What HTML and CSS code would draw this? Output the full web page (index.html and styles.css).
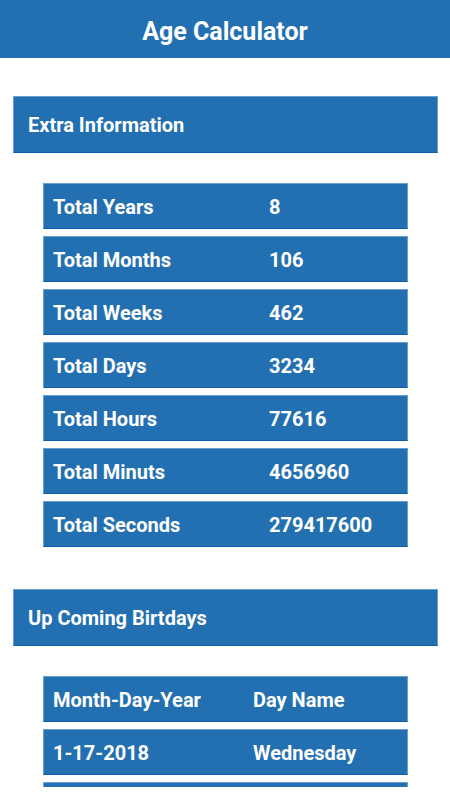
FILE: index.html
```html
<!DOCTYPE html>
<html lang="en">
<head>
<meta charset="utf-8">
<title>Age Calculator</title>
<link rel="stylesheet" href="styles.css">
</head>
<body>
<header class="appbar"><h1 class="appbar-title">Age Calculator</h1></header>
<main class="scroll">
  <section class="section">
    <h2 class="section-title">Extra Information</h2>
    <div class="table">
      <div class="row"><span>Total Years</span><span>8</span></div>
      <div class="row"><span>Total Months</span><span>106</span></div>
      <div class="row"><span>Total Weeks</span><span>462</span></div>
      <div class="row"><span>Total Days</span><span>3234</span></div>
      <div class="row"><span>Total Hours</span><span>77616</span></div>
      <div class="row"><span>Total Minuts</span><span>4656960</span></div>
      <div class="row"><span>Total Seconds</span><span>279417600</span></div>
    </div>
  </section>
  <section class="section section-second">
    <h2 class="section-title">Up Coming Birtdays</h2>
    <div class="table table-dates">
      <div class="row"><span>Month-Day-Year</span><span>Day Name</span></div>
      <div class="row"><span>1-17-2018</span><span>Wednesday</span></div>
      <div class="row"></div>
    </div>
  </section>
</main>
</body>
</html>
```

FILE: styles.css
```css
* { box-sizing: border-box; }
html, body { margin: 0; padding: 0; }
body {
  width: 450px;
  height: 800px;
  background: #ffffff;
  font-family: Roboto, "Liberation Sans", Arial, sans-serif;
  color: #ffffff;
  overflow: hidden;
}
.appbar {
  height: 58px;
  background: #2270b1;
  display: flex;
  align-items: center;
  justify-content: center;
  padding-top: 4px;
}
.appbar-title {
  margin: 0;
  font-size: 25px;
  font-weight: 700;
  line-height: 1;
}
.scroll {
  height: 729px;
  overflow: hidden;
  padding: 38px 12px 0 13px;
}
.section-second { margin-top: 42px; }
.section-title {
  margin: 0;
  height: 57px;
  display: flex;
  align-items: center;
  padding-left: 14px;
  padding-top: 1px;
  font-size: 20px;
  font-weight: 700;
  background: #2270b1;
  border: 1px solid #6a9fd0;
  border-bottom-color: #0e5ea8;
}
.table {
  margin: 30px 30px 0 30px;
  display: flex;
  flex-direction: column;
  gap: 7px;
}
.row {
  height: 46px;
  flex: none;
  display: grid;
  grid-template-columns: 216px 1fr;
  align-items: center;
  padding-left: 9px;
  padding-top: 1px;
  font-size: 20px;
  font-weight: 700;
  background: #2270b1;
  border: 1px solid #6a9fd0;
  border-bottom-color: #0e5ea8;
}
.table-dates .row { grid-template-columns: 200px 1fr; }
```
